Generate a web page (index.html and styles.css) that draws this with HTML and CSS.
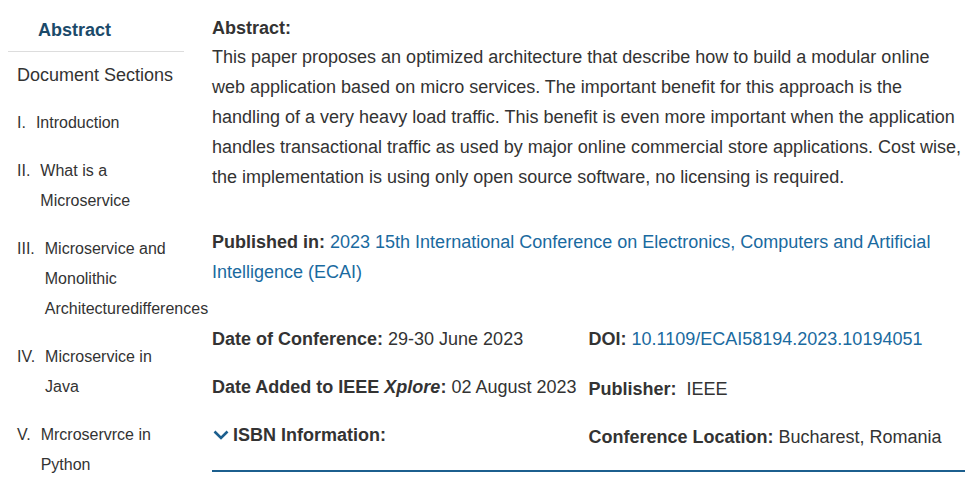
FILE: index.html
```html
<!DOCTYPE html>
<html lang="en">

<head>
    <meta charset="UTF-8">
    <meta name="viewport" content="width=device-width, initial-scale=1.0">
    <title>Abstract</title>

    <link rel="stylesheet" href="styles.css">
</head>

<body>
    <div id="page">
        <div class="sidebar">
            <div class="sidebar-tab">Abstract</div>
            <div class="sidebar-title">Document Sections</div>
            <ul class="sections">
                <li><span class="num">I.</span><span class="label">Introduction</span></li>
                <li><span class="num">II.</span><span class="label">What is a Microservice</span></li>
                <li><span class="num">III.</span><span class="label">Microservice and Monolithic Architecturedifferences</span></li>
                <li><span class="num">IV.</span><span class="label">Microservice in Java</span></li>
                <li><span class="num">V.</span><span class="label">Mrcroservrce in Python</span></li>
            </ul>
        </div>

        <div class="main">
            <h2 class="abstract-title">Abstract:</h2>
            <p class="abstract-text">This paper proposes an optimized architecture that describe how to build a modular online web application based on micro services. The important benefit for this approach is the handling of a very heavy load traffic. This benefit is even more important when the application handles transactional traffic as used by major online commercial store applications. Cost wise, the implementation is using only open source software, no licensing is required.</p>

            <div class="published"><strong>Published in:</strong> <a href="#">2023 15th International Conference on Electronics, Computers and Artificial Intelligence (ECAI)</a></div>

            <div class="meta">
                <div class="meta-item"><strong>Date of Conference:</strong> 29-30 June 2023</div>
                <div class="meta-item"><strong>DOI:</strong> <a href="#">10.1109/ECAI58194.2023.10194051</a></div>
                <div class="meta-item"><strong>Date Added to IEEE <em>Xplore</em>:</strong> 02 August 2023</div>
                <div class="meta-item lower"><strong>Publisher:</strong>&nbsp; IEEE</div>
                <div class="meta-item"><svg class="chevron" width="16" height="10" viewBox="0 0 16 10"><polyline points="1.5,1.5 8,8 14.5,1.5" fill="none" stroke="#1c5f8e" stroke-width="2.6"/></svg><strong>ISBN Information:</strong></div>
                <div class="meta-item lower"><strong>Conference Location:</strong> Bucharest, Romania</div>
            </div>
        </div>
    </div>
</body>

</html>
```

FILE: styles.css
```css
body {
    margin: 0;
    background-color: #fff;
    color: #333;
    font-family: "Liberation Sans", Arial, sans-serif;
}

#page {
    display: flex;
    padding: 0 8px;
}

.sidebar {
    width: 176px;
    flex-shrink: 0;
}

.sidebar-tab {
    font-size: 18px;
    font-weight: bold;
    line-height: 24px;
    color: #1b4a6a;
    padding: 18px 0 9px 30px;
    border-bottom: 1px solid #ddd;
}

.sidebar-title {
    font-size: 18px;
    line-height: 24px;
    padding: 11px 0 0 9px;
}

.sections {
    list-style: none;
    margin: 21px 0 0 0;
    padding: 0 0 0 9px;
    font-size: 16px;
    line-height: 30px;
}

.sections li {
    display: flex;
    gap: 10px;
    margin-bottom: 18px;
}

.sections .label {
    width: 130px;
}

.main {
    margin-left: 28px;
    width: 753px;
    font-size: 18px;
}

.abstract-title {
    font-size: 18px;
    line-height: 28px;
    margin: 14px 0 0 0;
}

.abstract-text {
    margin: 0;
    line-height: 30px;
}

.published {
    margin-top: 35px;
    line-height: 30px;
}

a {
    color: #1a6aa0;
    text-decoration: none;
}

.meta {
    display: grid;
    grid-template-columns: 1fr 1fr;
    grid-auto-rows: 30px;
    row-gap: 18px;
    margin-top: 37px;
    padding-bottom: 20px;
    border-bottom: 2px solid #1c5f8e;
    line-height: 30px;
}

.meta-item.lower {
    padding-top: 2px;
}

.chevron {
    margin: 0 4px 0 1px;
    vertical-align: 1px;
}
```
